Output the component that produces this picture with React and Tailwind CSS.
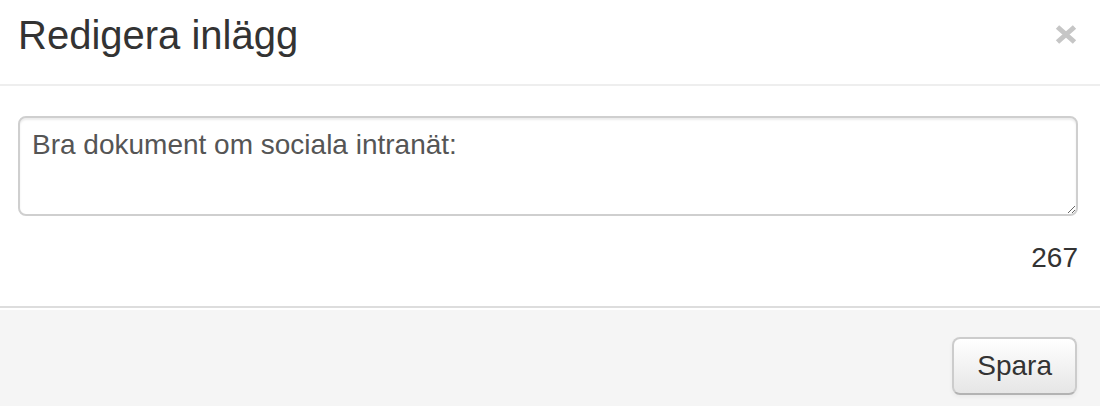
import React from "react";

export default function App() {
  return (
    <div className="w-[1100px] h-[406px] bg-white font-['Liberation_Sans',Arial,sans-serif] text-[#333] flex flex-col overflow-hidden">
      <div className="h-[86px] shrink-0 border-b-2 border-[#eeeeee] flex items-start justify-between pl-[18px] pr-[23px] pt-[13px]">
        <h3 className="text-[40px] leading-[44px] font-normal text-[#333]">Redigera inlägg</h3>
        <button className="mt-[12px] w-[22px] h-[19px] flex items-center justify-center" aria-label="Stäng">
          <svg width="22" height="19" viewBox="0 0 22 19">
            <path d="M2.5 2 L19.5 17 M19.5 2 L2.5 17" stroke="#c6c6c6" strokeWidth="5" fill="none" />
          </svg>
        </button>
      </div>
      <div className="h-[220px] shrink-0 pl-[18px] pr-[22px] pt-[30px] flex flex-col">
        <textarea
          className="w-full h-[100px] border-2 border-[#cfcfcf] rounded-[8px] pl-[12px] pr-[11px] pt-[7px] text-[28px] leading-[40px] text-[#555] shadow-[inset_0_2px_2px_rgba(0,0,0,0.075)] outline-none resize-y font-['Liberation_Sans',Arial,sans-serif]"
          defaultValue="Bra dokument om sociala intranät:"
        />
        <div className="mt-[22px] text-right text-[28px] leading-[40px] text-[#333]">267</div>
      </div>
      <div className="flex-1 border-t-2 border-[#dddddd] bg-[#f5f5f5] shadow-[inset_0_2px_0_#ffffff] flex justify-end items-start pt-[29px] pr-[23px]">
        <button className="h-[58px] px-[23px] border-2 border-[#cccccc] border-b-[#b3b3b3] rounded-[8px] bg-gradient-to-b from-white to-[#e6e6e6] text-[28px] leading-[40px] text-[#333] shadow-[inset_0_2px_0_rgba(255,255,255,0.2),0_2px_4px_rgba(0,0,0,0.05)]">
          Spara
        </button>
      </div>
    </div>
  );
}
